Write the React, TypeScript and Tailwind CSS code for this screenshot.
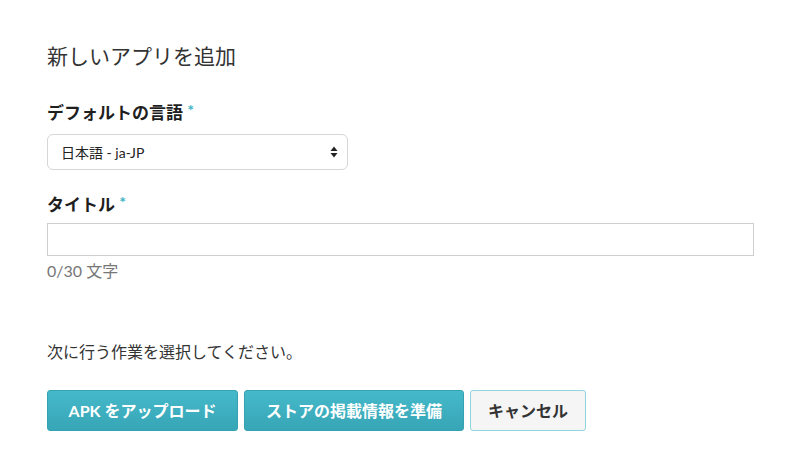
const font = "font-['Lato','Noto_Sans_CJK_JP',sans-serif]";

export default function App() {
  return (
    <div className={`w-[800px] h-[465px] bg-white px-[47px] pt-[40px] text-[#333] ${font}`}>
      <h1 className="text-[21px] leading-[32px] font-normal text-[#333]">新しいアプリを追加</h1>

      <div className="mt-[29px]">
        <label className="block text-[17px] leading-[24px] font-bold text-[#1f1f1f]">
          デフォルトの言語 <span className="text-[#3fb4c6] text-[16px] relative -top-[3px]">*</span>
        </label>
        <div className="mt-[9px] w-[301px] h-[36px] rounded-[6px] border border-[#d6d6d6] bg-white flex items-center justify-between pl-[13px] pr-[9px]">
          <span className="text-[14px] text-[#222]">日本語 - ja-JP</span>
          <svg width="8" height="12" viewBox="0 0 8 12">
            <path d="M4 0.5 L7.5 5 H0.5 Z" fill="#222" />
            <path d="M4 11.5 L7.5 7 H0.5 Z" fill="#222" />
          </svg>
        </div>
      </div>

      <div className="mt-[23px]">
        <label className="block text-[17px] leading-[24px] font-bold text-[#1f1f1f]">
          タイトル <span className="text-[#3fb4c6] text-[16px] relative -top-[3px]">*</span>
        </label>
        <div className="mt-[6px] w-[707px] h-[33px] border border-[#cfcfcf] bg-white" />
        <p className="mt-[3px] text-[16px] leading-[24px] text-[#777]">0/30 文字</p>
      </div>

      <p className="mt-[57px] text-[16px] leading-[24px] text-[#333]">次に行う作業を選択してください。</p>

      <div className="mt-[26px] flex gap-[6px]">
        <button className="h-[41px] w-[191px] rounded-[3px] bg-gradient-to-b from-[#45b9ca] to-[#37a6b6] border border-[#35a2b2] text-white font-bold text-[16px]">
          APK をアップロード
        </button>
        <button className="h-[41px] w-[220px] rounded-[3px] bg-gradient-to-b from-[#45b9ca] to-[#37a6b6] border border-[#35a2b2] text-white font-bold text-[16px]">
          ストアの掲載情報を準備
        </button>
        <button className="h-[41px] w-[116px] rounded-[3px] bg-[#f5f5f5] border border-[#8fd4de] text-[#333] font-bold text-[16px]">
          キャンセル
        </button>
      </div>
    </div>
  );
}
